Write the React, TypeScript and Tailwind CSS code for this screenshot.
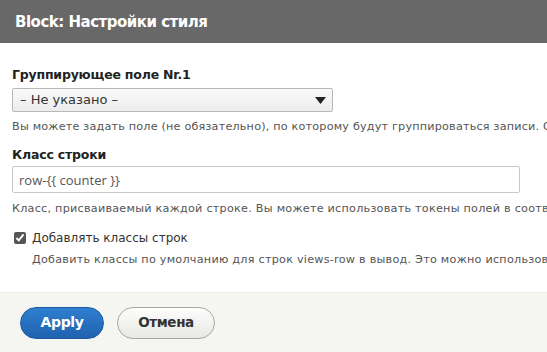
import { useState } from 'react';

export default function App() {
  const [addClasses, setAddClasses] = useState(true);
  const [rowClass, setRowClass] = useState('row-{{ counter }}');

  return (
    <div className="w-[547px] h-[352px] overflow-hidden bg-white flex flex-col text-[#333]" style={{ fontFamily: '"DejaVu Sans", Verdana, sans-serif' }}>
      {/* Title bar */}
      <div className="h-[43px] shrink-0 bg-[#686868] flex items-center px-[15px]">
        <h1 className="text-white text-[15px] leading-[18px] font-bold tracking-[-0.5px]">Block: Настройки стиля</h1>
      </div>

      {/* Form */}
      <div className="flex-1 px-[12px] pt-[24px] overflow-hidden whitespace-nowrap">
        <div className="mb-[13px]">
          <label className="block text-[12.5px] leading-[16px] font-bold text-[#222] mb-[5px] tracking-[-0.2px]">Группирующее поле Nr.1</label>
          <div className="relative w-[321px] h-[24px] rounded-[2px] border border-[#b8b8b8] bg-gradient-to-b from-[#fafafa] to-[#ececec] flex items-center pl-[7px] text-[13px] leading-[16px] text-[#333]">
            – Не указано –
            <svg className="absolute right-[6px] top-[8px]" width="11" height="7" viewBox="0 0 11 7">
              <path d="M0 0 H11 L5.5 7 Z" fill="#222" />
            </svg>
          </div>
          <p className="mt-[8px] text-[11.2px] leading-[14px] text-[#555] tracking-[0.2px]">
            Вы можете задать поле (не обязательно), по которому будут группироваться записи. Оставьте пустым
          </p>
        </div>

        <div className="mb-[14px]">
          <label className="block text-[12.5px] leading-[16px] font-bold text-[#222] mb-[3px] tracking-[-0.2px]">Класс строки</label>
          <input
            value={rowClass}
            onChange={(e) => setRowClass(e.target.value)}
            className="block w-[508px] h-[27px] border border-[#c8c8c8] rounded-[2px] bg-white px-[6px] text-[13px] text-[#555] outline-none"
            style={{ fontFamily: '"Open Sans", sans-serif' }}
          />
          <p className="mt-[9px] text-[11.2px] leading-[14px] text-[#555] tracking-[0.25px]">
            Класс, присваиваемый каждой строке. Вы можете использовать токены полей в соответствии
          </p>
        </div>

        <div>
          <label className="flex items-center gap-[6px] text-[12px] leading-[16px] text-[#333] pl-[2px]">
            <input
              type="checkbox"
              checked={addClasses}
              onChange={(e) => setAddClasses(e.target.checked)}
              className="w-[12px] h-[12px] accent-[#555] m-0"
            />
            Добавлять классы строк
          </label>
          <p className="mt-[7px] pl-[20px] text-[11.2px] leading-[14px] text-[#555] tracking-[0.25px]">
            Добавить классы по умолчанию для строк views-row в вывод. Это можно использовать
          </p>
        </div>
      </div>

      {/* Footer */}
      <div className="h-[60px] shrink-0 bg-[#f5f5f2] border-t border-[#eeeeea] flex items-center gap-[13px] px-[20px]">
        <button className="h-[32px] w-[84px] rounded-full bg-gradient-to-b from-[#2f7fd0] to-[#1f62b0] border border-[#1e5aa0] text-white text-[14px] font-bold tracking-[-0.4px]">
          Apply
        </button>
        <button className="h-[32px] w-[98px] rounded-full bg-gradient-to-b from-[#fdfdfd] to-[#e8e8e4] border border-[#a6a6a6] text-[#333] text-[13.5px] font-bold tracking-[-0.4px]">
          Отмена
        </button>
      </div>
    </div>
  );
}
